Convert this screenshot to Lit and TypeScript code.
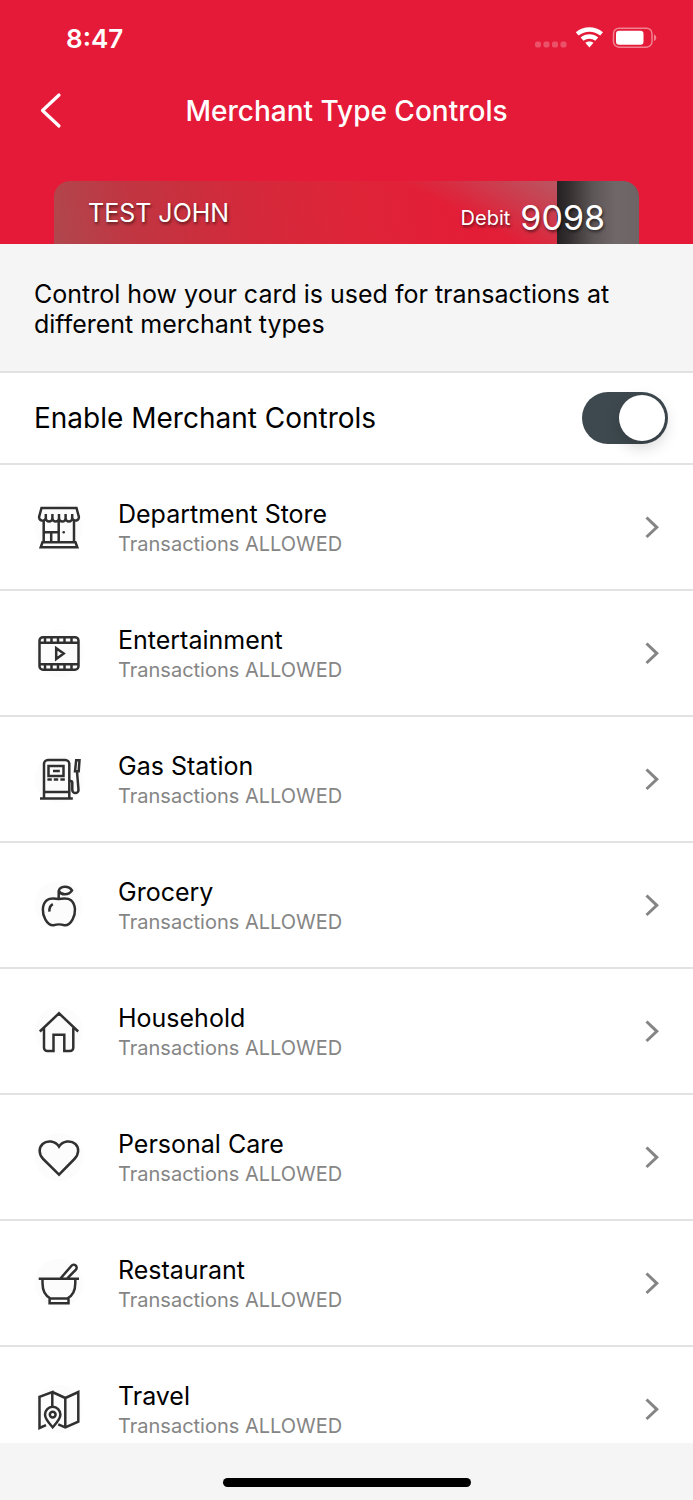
import { LitElement, html, css, svg } from "lit";
import { customElement, property, state } from "lit/decorators.js";

const icons: Record<string, unknown> = {
  store: svg`
    <path d="M6.500 5H41.500L43.700 13.200a3 3 0 0 1-6.500 2a3.300 3.300 0 0 1-6.600 0a3.300 3.300 0 0 1-6.600 0a3.300 3.300 0 0 1-6.600 0a3.300 3.300 0 0 1-6.600 0a3 3 0 0 1-6.500-2ZM10.800 15.500V11M17.400 15.500V11M24 15.500V11M30.600 15.500V11M37.200 15.500V11"/>
    <path d="M8.700 18V39.300M39 18V39.300M23.700 18V39.300M8.700 29.300H23.700M16.200 29.300V39.300M7.500 39.300H40.500L42.300 44.300H5.700Z"/>
    <circle cx="28.700" cy="29.300" r="1.300" fill="currentColor" stroke="none"/>`,
  film: svg`
    <rect x="4.500" y="8.200" width="39" height="32.500" rx="3.500"/>
    <path d="M4.500 13.700H43.500M4.500 35.300H43.500M10 8.200V13.700M16.500 8.200V13.700M23 8.200V13.700M29.500 8.200V13.700M36.500 8.200V13.700M10 35.300V40.700M16.500 35.300V40.700M23 35.300V40.700M29.500 35.300V40.700M36.500 35.300V40.700M21.200 19.200V30L28.700 24.600Z"/>`,
  gas: svg`
    <path d="M9 43.300V9a4 4 0 0 1 4-4H30.300a4 4 0 0 1 4 4V43.300M5 43.500H37.800M9 37H34.300M13.500 11H28.500V21H13.500ZM18 15.900H24.800M12.400 24.500H16.800M18.800 24.500H23.200M25.400 24.500H29.800"/>
    <path d="M34.300 26H35.500a1.800 1.800 0 0 1 1.800 1.800V35a3.100 3.100 0 0 0 6.200 0L42 16.500M41.200 5.200H44.500L43.700 16.300H40Z"/>`,
  apple: svg`
    <path d="M23.700 18C19 17.200 15 16.600 11.800 19.200C6.600 23.500 7 32.500 10.300 38.300C12.700 42.600 15.600 44.600 19 44.200C21.500 43.200 26.500 43.200 29 44.200C32.500 44.600 35.300 42.600 37.600 38.300C41 32.500 41 23.500 36 19.200C33 16.600 28.500 17.200 23.700 18Z"/>
    <path d="M23.700 18V10C25 4.800 33.500 4.300 37 9.500C33.500 14.500 26.500 14.500 23.700 10"/>
    <path d="M14.400 30.600C14.200 27.200 15.300 24.600 17.800 23.200"/>`,
  house: svg`
    <path d="M4.800 24.500L24 6.300L43.200 24.500M9 21V40.700a3.300 3.300 0 0 0 3.300 3.300H18.500V27.700H29.300V44H35a3.300 3.300 0 0 0 3.300-3.300V21"/>`,
  heart: svg`
    <path d="M24 41.700L8.200 26C3.400 21.200 3.800 14.600 7.600 11C12 7 20.200 7.600 24 13.600C27.800 7.600 36 7 40.400 11C44.200 14.600 44.200 21.200 39.400 26Z"/>`,
  bowl: svg`
    <path d="M3.700 19.700H44M7.500 19.700V24C7.500 31.500 10.500 37 15.500 39.500H32.300C37.300 37 40.300 31.500 40.300 24V19.700M14.600 39.500V44.200H33.500V39.500M25.700 19.300L36.500 6.700a2.900 2.900 0 0 1 4.400 3.900L32.300 19.300"/>`,
  map: svg`
    <path d="M17.300 21V7L4.500 11.800V43L11 40.200M17.300 7L30.300 13L43.300 7V36.600L30.300 42.500L23.200 39.400M30.300 13V42.500"/>
    <path d="M17.700 42.300C13.500 37.500 10 34 10 29.500a7.700 7.700 0 0 1 15.400 0C25.400 34 21.900 37.500 17.700 42.300Z"/>
    <circle cx="17.700" cy="29.600" r="2.900"/>`,
};

const merchants = [
  { icon: "store", name: "Department Store" },
  { icon: "film", name: "Entertainment" },
  { icon: "gas", name: "Gas Station" },
  { icon: "apple", name: "Grocery" },
  { icon: "house", name: "Household" },
  { icon: "heart", name: "Personal Care" },
  { icon: "bowl", name: "Restaurant" },
  { icon: "map", name: "Travel" },
];

@customElement("merchant-row")
export class MerchantRow extends LitElement {
  @property() name = "";
  @property() icon = "";

  static styles = css`
    :host { display: block; border-bottom: 2px solid #e2e2e3; }
    .row {
      display: flex; align-items: center; height: 124px; padding: 0 33px 0 35px;
      color: #000; text-decoration: none;
    }
    .icon { flex: none; width: 48px; height: 48px; color: #303031; }
    .text { flex: 1; margin-left: 35px; padding-top: 2px; }
    .name { display: block; font-size: 25px; line-height: 32px; }
    .status { display: block; font-size: 20px; line-height: 28px; color: #858585; }
    .chevron { flex: none; width: 16px; height: 24px; }
  `;

  render() {
    return html`
      <a class="row" href="#">
        <svg class="icon" viewBox="0 0 48 48" fill="none" stroke="currentColor" stroke-width="2.500" aria-hidden="true">
          <circle cx="24" cy="24" r="24" fill="#fcfcfc" stroke="none"/>
          ${icons[this.icon]}
        </svg>
        <span class="text">
          <span class="name">${this.name}</span>
          <span class="status">Transactions ALLOWED</span>
        </span>
        <svg class="chevron" viewBox="0 0 16 24" fill="none" stroke="#858585" stroke-width="3" aria-hidden="true"><path d="M2.500 2.500L12.800 12.300L2.500 22"/></svg>
      </a>`;
  }
}

@customElement("app-root")
export class AppRoot extends LitElement {
  @state() private enabled = true;

  static styles = css`
    :host {
      display: flex; flex-direction: column; height: 100vh; overflow: hidden;
      background: #fff; color: #000;
      font-family: Inter, "Liberation Sans", sans-serif;
    }
    .header { flex: none; background: #e51a38; color: #fff; }
    .status-bar {
      display: flex; align-items: center; justify-content: space-between;
      height: 76px; padding: 0 36px 0 66px;
    }
    .time { font-size: 26px; font-weight: 600; }
    .signals { width: 122px; height: 24px; }
    .nav {
      display: grid; grid-template-columns: 64px 1fr 64px; align-items: center;
      height: 70px; padding: 0 24px;
    }
    .back { padding: 0; border: 0; background: none; color: inherit; height: 48px; text-align: left; }
    .back svg { display: block; margin-left: 14px; }
    .title { margin: 0; font-size: 28px; line-height: 34px; font-weight: 500; text-align: center; }
    .card {
      display: flex; align-items: center; justify-content: space-between;
      height: 63px; margin: 35px 54px 0; padding: 0 34px; box-sizing: border-box;
      border-radius: 16px 16px 0 0;
      font-size: 25px; text-shadow: 1px 2px 3px rgba(0, 0, 0, .55);
      background:
        linear-gradient(90deg, transparent 86%, #252122 86%, #332e2f 88%, #5c5556 92%, #706769 96%, #6e6466 100%),
        linear-gradient(28deg, transparent 66%, rgba(165, 115, 120, .75) 92%),
        linear-gradient(80deg, #b0474e 0%, #c13541 14%, #d4293b 34%, #df2438 52%, #e31d36 70%, #df2239 100%);
    }
    .account { display: flex; align-items: center; gap: 10px; padding-top: 10px; font-size: 20px; }
    .digits { font-size: 34px; }
    .hint {
      flex: none; margin: 0; padding: 35px 34px 32px; border-bottom: 2px solid #e2e2e3;
      background: #f5f5f5; font-size: 25px; line-height: 30px;
    }
    .master {
      flex: none; display: flex; align-items: center; justify-content: space-between;
      height: 90px; padding: 0 25px 0 34px; border-bottom: 2px solid #e2e2e3;
      font-size: 28px;
    }
    .switch {
      appearance: none; display: flex; align-items: center; width: 86px; height: 52px;
      margin: 0; padding: 3px; box-sizing: border-box; border-radius: 26px; background: #c8cccf;
    }
    .switch::before {
      content: ""; width: 46px; height: 46px; border-radius: 50%; background: #fff;
      box-shadow: 0 6px 16px rgba(0, 0, 0, .18);
    }
    .switch:checked { justify-content: flex-end; background: #3e494f; }
    .list { flex: 1; min-height: 0; overflow: hidden; }
    .home { flex: none; display: flex; justify-content: center; padding: 35px 0 13px; background: #f5f5f5; }
    .bar { width: 248px; height: 9px; border-radius: 5px; background: #000; }
  `;

  render() {
    return html`
      <header class="header">
        <div class="status-bar">
          <span class="time">8:47</span>
          <svg class="signals" viewBox="0 0 122 24" fill="#fff" aria-hidden="true">
            <g opacity=".24"><rect x="0" y="15.500" width="6" height="6" rx="2"/><rect x="8.500" y="15.500" width="6" height="6" rx="2"/><rect x="17" y="15.500" width="6" height="6" rx="2"/><rect x="25.500" y="15.500" width="6" height="6" rx="2"/></g>
            <path d="M40.800 6.200C48.500 -.300 60.300 -.300 68 6.200L65.200 9.600C59 4.500 49.800 4.500 43.600 9.600ZM45.600 11.500C50.600 7.200 58.200 7.200 63.200 11.500L60.300 14.800C56.800 12 52 12 48.500 14.800ZM50.300 16.800C52.700 14.900 56.100 14.900 58.500 16.800L54.400 21.500Z"/>
            <rect x="78.500" y="2.200" width="38.500" height="19" rx="5.500" fill="none" stroke="#fff" stroke-opacity=".45" stroke-width="1.500"/>
            <rect x="81" y="4.700" width="27.500" height="14" rx="3"/>
            <path d="M119 8.500C122 9.500 122 14 119 15Z" opacity=".45"/>
          </svg>
        </div>
        <div class="nav">
          <button class="back" aria-label="Back">
            <svg width="24" height="38" viewBox="0 0 24 38" fill="none" stroke="#fff" stroke-width="3.200" stroke-linecap="round" stroke-linejoin="round"><path d="M21 3L4.500 18.500L21 34"/></svg>
          </button>
          <h1 class="title">Merchant Type Controls</h1>
        </div>
        <div class="card">
          <span>TEST JOHN</span>
          <span class="account">Debit <span class="digits">9098</span></span>
        </div>
      </header>
      <p class="hint">Control how your card is used for transactions at different merchant types</p>
      <div class="master">
        <label for="enable">Enable Merchant Controls</label>
        <input class="switch" id="enable" type="checkbox" role="switch" .checked=${this.enabled}
          @change=${(e: Event) => { this.enabled = (e.target as HTMLInputElement).checked; }}>
      </div>
      <main class="list">
        ${merchants.map((m) => html`<merchant-row name=${m.name} icon=${m.icon}></merchant-row>`)}
      </main>
      <div class="home"><div class="bar"></div></div>`;
  }
}
